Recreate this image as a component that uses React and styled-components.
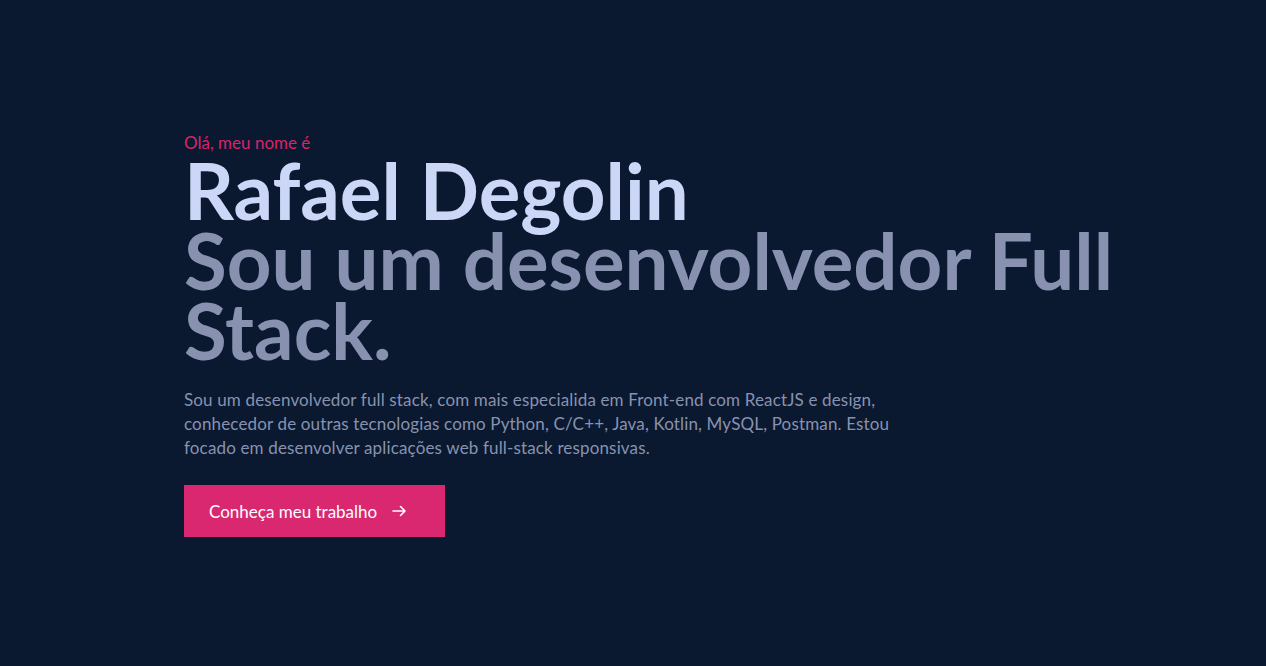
import React from "react";
import styled, { createGlobalStyle } from "styled-components";

const GlobalStyle = createGlobalStyle`
  * { box-sizing: border-box; }
  body {
    margin: 0;
    background: #0a192f;
    font-family: Lato, "Noto Sans", sans-serif;
  }
`;

const Hero = styled.section`
  min-height: 100vh;
  display: flex;
  flex-direction: column;
  justify-content: center;
  align-items: flex-start;
  padding: 0 120px 0 184px;
`;

const Greeting = styled.p`
  margin: 4px 0 2px;
  color: #d6246e;
  font-size: 17px;
  line-height: 20px;
`;

const BigHeading = styled.h1`
  margin: 0;
  font-size: 78px;
  font-weight: 700;
  line-height: 70px;
  color: ${({ $muted }) => ($muted ? "#8892b0" : "#ccd6f6")};
`;

const Lead = styled.p`
  margin: 23px 0 0;
  max-width: 714px;
  color: #8892b0;
  font-size: 17px;
  letter-spacing: 0.15px;
  line-height: 24px;
`;

const Button = styled.a`
  margin-top: 25px;
  display: inline-flex;
  align-items: center;
  gap: 15px;
  width: 261px;
  height: 52px;
  padding: 0 25px;
  background: #d9286f;
  color: #fff;
  font-size: 17px;
  text-decoration: none;
  cursor: pointer;
`;

const Arrow = () => (
  <svg width="14" height="14" viewBox="0 0 14 14" fill="none" stroke="#fff" strokeWidth="1.6" strokeLinecap="round" strokeLinejoin="round">
    <path d="M1 7h12M8.5 2.5 13 7l-4.5 4.5" />
  </svg>
);

export default function App() {
  return (
    <>
      <GlobalStyle />
      <Hero>
        <Greeting>Olá, meu nome é</Greeting>
        <BigHeading>Rafael Degolin</BigHeading>
        <BigHeading as="h2" $muted>Sou um desenvolvedor Full Stack.</BigHeading>
        <Lead>
          Sou um desenvolvedor full stack, com mais especialida em Front-end com ReactJS e design,
          conhecedor de outras tecnologias como Python, C/C++, Java, Kotlin, MySQL, Postman. Estou
          focado em desenvolver aplicações web full-stack responsivas.
        </Lead>
        <Button>
          Conheça meu trabalho <Arrow />
        </Button>
      </Hero>
    </>
  );
}
